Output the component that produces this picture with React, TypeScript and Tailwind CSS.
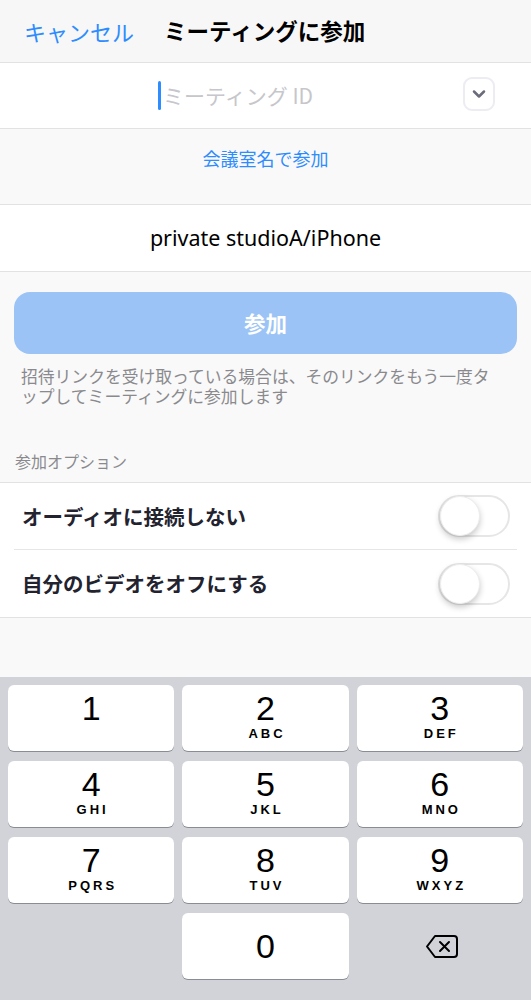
import { ChevronDown } from "lucide-react";

const jp = { fontFamily: '"Noto Sans CJK JP", "Noto Sans", sans-serif' };
const num = { fontFamily: '"Liberation Sans", Arial, sans-serif' };

const keys: { d: string; l: string }[] = [
  { d: "1", l: "" },
  { d: "2", l: "ABC" },
  { d: "3", l: "DEF" },
  { d: "4", l: "GHI" },
  { d: "5", l: "JKL" },
  { d: "6", l: "MNO" },
  { d: "7", l: "PQRS" },
  { d: "8", l: "TUV" },
  { d: "9", l: "WXYZ" },
];

function Toggle() {
  return (
    <div className="w-[72px] h-[42px] rounded-full border-2 border-[#e6e6e6] bg-white flex items-center">
      <div className="w-[40px] h-[40px] rounded-full bg-white shadow-[0_3px_6px_rgba(0,0,0,0.22)] border border-[#ededed]" />
    </div>
  );
}

function Key({ d, l }: { d: string; l: string }) {
  return (
    <div className="h-[66px] bg-white rounded-[6px] shadow-[0_1px_0_#888c94] flex flex-col items-center pt-[6px]" style={num}>
      <span className="text-[34px] leading-[34px] text-black">{d}</span>
      {l && <span className="text-[13px] font-bold tracking-[3px] leading-[18px] text-black pl-[3px]">{l}</span>}
    </div>
  );
}

export default function App() {
  return (
    <div className="w-[531px] h-[1000px] bg-[#f9f9f9] flex flex-col overflow-hidden" style={jp}>
      <div className="h-[63px] flex items-center border-b border-[#e2e2e2] bg-[#f7f7f7] shrink-0">
        <span className="ml-[24px] text-[22px] text-[#2d8cff]">キャンセル</span>
        <span className="ml-[30px] text-[22.5px] font-bold text-black">ミーティングに参加</span>
      </div>
      <div className="h-[66px] bg-white border-b border-[#e2e2e2] flex items-center shrink-0 relative">
        <div className="ml-[158px] w-[3px] h-[29px] bg-[#2d8cff] rounded-full" />
        <span className="ml-[2px] text-[21px] text-[#c6c6cb]">ミーティング ID</span>
        <div className="absolute left-[463px] top-[14px] w-[32px] h-[34px] rounded-[9px] border-2 border-[#ececf2] flex items-center justify-center">
          <ChevronDown size={20} strokeWidth={3} color="#6b6b7b" />
        </div>
      </div>
      <div className="h-[76px] flex items-start justify-center pt-[16px] border-b border-[#e2e2e2] shrink-0">
        <span className="text-[18px] text-[#2d8cff]">会議室名で参加</span>
      </div>
      <div className="h-[67px] bg-white border-b border-[#e2e2e2] flex items-center justify-center shrink-0">
        <span className="text-[21.5px] text-black" style={{ fontFamily: '"Noto Sans", "Open Sans", sans-serif' }}>private studioA/iPhone</span>
      </div>
      <div className="px-[14px] pt-[20px] shrink-0">
        <div className="h-[62px] rounded-[16px] bg-[#9bc3f5] flex items-center justify-center">
          <span className="text-[21.5px] font-bold text-white">参加</span>
        </div>
      </div>
      <p className="pl-[21px] pr-[32px] mt-[12px] text-[16.8px] leading-[20px] text-[#8a8a8e] shrink-0">
        招待リンクを受け取っている場合は、そのリンクをもう一度タップしてミーティングに参加します
      </p>
      <div className="mt-[40px] px-[15px] text-[16px] leading-[30px] text-[#8a8a8e] h-[36px] shrink-0">参加オプション</div>
      <div className="bg-white border-t border-b border-[#e2e2e2] shrink-0">
        <div className="h-[67px] mx-[14px] flex items-center justify-between border-b border-[#e6e6e6]">
          <span className="ml-[8px] text-[20.5px] font-bold text-[#23232f]">オーディオに接続しない</span>
          <div className="mr-[7px]"><Toggle /></div>
        </div>
        <div className="h-[67px] mx-[14px] flex items-center justify-between">
          <span className="ml-[8px] text-[20.5px] font-bold text-[#23232f]">自分のビデオをオフにする</span>
          <div className="mr-[7px]"><Toggle /></div>
        </div>
      </div>
      <div className="flex-1" />
      <div className="h-[323px] bg-[#d1d3d9] px-[8px] pt-[8px] shrink-0">
        <div className="grid grid-cols-3 gap-x-[8px] gap-y-[10px]">
          {keys.map((k) => (
            <Key key={k.d} d={k.d} l={k.l} />
          ))}
          <div />
          <div className="h-[66px] bg-white rounded-[6px] shadow-[0_1px_0_#888c94] flex items-center justify-center" style={num}>
            <span className="text-[34px] text-black">0</span>
          </div>
          <div className="h-[66px] flex items-center justify-center pl-[4px]">
            <svg width="34" height="25" viewBox="0 0 34 25" fill="none" stroke="#000" strokeWidth="2" strokeLinejoin="round">
              <path d="M10 2 H29 A3 3 0 0 1 32 5 V20 A3 3 0 0 1 29 23 H10 L2 12.5 Z" />
              <path d="M15 8 L24 17 M24 8 L15 17" strokeLinecap="round" />
            </svg>
          </div>
        </div>
      </div>
    </div>
  );
}
